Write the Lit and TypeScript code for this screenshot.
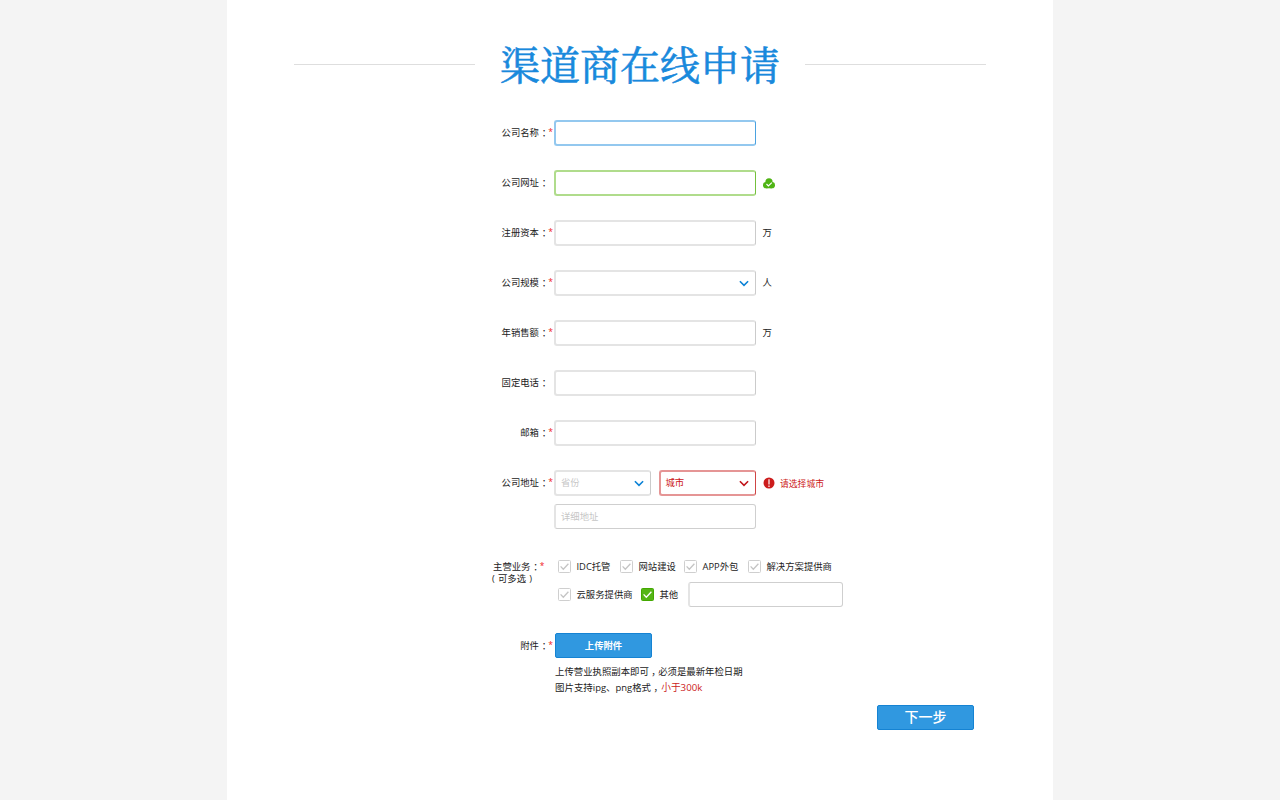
import { LitElement, html, css, svg, nothing } from "lit";
import { customElement, property } from "lit/decorators.js";

const chevron = (x: string) => html`<svg class="chev ${x}" width="10" height="7" viewBox="0 0 10 7">
  <path d="M0.9 1.2 L5 5.3 L9.1 1.2" fill="none" stroke="currentColor" stroke-width="1.6"/></svg>`;

@customElement("form-label")
class FormLabel extends LitElement {
  @property() text = "";
  @property({ type: Boolean }) required = false;
  static styles = css`
    :host { display: flex; justify-content: flex-end; line-height: 14px; white-space: nowrap; }
    .colon {
      width: 5px; margin: 0 1.5px 0 2.9px; line-height: 13px;
      font-family: "Noto Sans CJK SC", sans-serif; font-feature-settings: "halt";
    }
    .star { width: 4.7px; color: #f02020; font-size: 8.5px; line-height: 12px; }
  `;
  render() {
    return html`<span>${this.text}</span><span class="colon">：</span><span class="star">${this.required ? "*" : nothing}</span>`;
  }
}

@customElement("check-item")
class CheckItem extends LitElement {
  @property() text = "";
  @property({ type: Boolean }) checked = false;
  static styles = css`
    :host { display: flex; align-items: center; height: 14px; line-height: 14px; white-space: nowrap; }
    svg { display: block; margin-right: 5.5px; }
    span { padding-top: 1px; }
  `;
  render() {
    return html`<svg width="13" height="13" viewBox="0 0 13 13">
      ${this.checked
        ? svg`<rect x="0.5" y="0.5" width="12" height="12" rx="1" fill="#55b516" stroke="#43a800"/>`
        : svg`<rect x="0.5" y="0.5" width="12" height="12" rx="1" fill="#fff" stroke="#cfcfcf"/>`}
      <path d="M2.6 6.4 L5.3 9.2 L10.4 3.8" fill="none" stroke="${this.checked ? "#fff" : "#c4c4c4"}" stroke-width="1.3"/>
    </svg><span>${this.text}</span>`;
  }
}

@customElement("app-root")
class AppRoot extends LitElement {
  static styles = css`
    :host {
      display: flex; justify-content: center; height: 800px; background: #f4f4f4; overflow: hidden;
      font-family: "Open Sans", "Noto Sans CJK SC", sans-serif; font-size: 9.35px; color: #222;
    }
    .page { width: 826px; height: 800px; background: #fff; box-sizing: border-box; padding-top: 36px; }
    .head { display: flex; align-items: center; justify-content: center; height: 57px; gap: 25px; }
    .rule { width: 181px; height: 1px; background: #dedede; }
    h1 {
      margin: 0; width: 280px; font: 400 40px/53px "Noto Serif CJK SC", "Noto Serif SC", "Noto Sans CJK SC", serif;
      height: 57px; color: #1989dc; white-space: nowrap; -webkit-text-stroke: 0.6px #1989dc;
    }
    .form { margin-top: 27px; padding-left: 253px; }
    .row { display: grid; grid-template-columns: 73px auto; column-gap: 1px; align-items: center; height: 26px; margin-bottom: 24px; }
    .line { display: flex; align-items: center; }
    .box {
      box-sizing: border-box; display: flex; align-items: center; justify-content: space-between;
      width: 202px; height: 26px; padding: 0 6px 0 5px; border: 2px solid #e4e4e4;
      border-right: 1px solid #cbcbcb; border-radius: 3px; color: #c6c6c6; line-height: 14px;
    }
    .focus { border-color: #93c8ef; border-right-color: #4ba2e0; }
    .valid { border-color: #b0dc8c; border-right-color: #74c03c; }
    .error { border-color: #e59595; border-right-color: #cf4545; color: #cc1717; }
    .half { width: 97px; }
    .error.half { width: 97.5px; }
    .gap { margin-left: 7.5px; }
    .crisp { border-width: 1px 1px 1px 2px; border-color: #cfcfcf #cfcfcf #cfcfcf #e4e4e4; height: 25px; }
    .chev { display: block; margin-left: auto; }
    .blue { color: #0b82d6; }
    .red { color: #c1151b; }
    .unit { margin-left: 6.5px; line-height: 14px; }
    .mark { margin-left: 7px; display: block; }
    .msg { margin-left: 5px; color: #cc1717; line-height: 14px; font-size: 8.8px; padding-top: 1px; }
    .detail { margin: -16px 0 0 74px; }
    .biz { display: grid; grid-template-columns: 64.5px auto; margin-top: 30px; align-items: start; }
    .biz form-label { padding-top: 1px; }
    .sub {
      display: flex; margin: -2px 0 0 9px; line-height: 13px; white-space: nowrap;
      gap: 3.2px; padding-left: 3px;
    }
    .checks { display: grid; grid-template-columns: 62px 64px 64px auto; margin-left: 13.5px; }
    .checks2 { display: flex; align-items: center; margin: 8px 0 0 13.5px; height: 26px; }
    .checks2 check-item:first-child { width: 83px; }
    .checks2 check-item:nth-child(2) { width: 47px; }
    .other { width: 155px; }
    .attach { display: grid; grid-template-columns: 73px auto; column-gap: 2px; align-items: center; margin-top: 26px; }
    .btn {
      box-sizing: border-box; width: 97px; height: 25px; border: 1px solid #1583d3; border-radius: 2px;
      background: #3098e0; color: #fff; font: 700 9.35px/23px "Noto Sans CJK SC", sans-serif; text-align: center; padding: 0;
    }
    .note { margin: 6px 0 0 75px; white-space: nowrap; font-size: 9.38px; }
    .note p { display: flex; margin: 0; height: 16px; line-height: 16px; }
    .c { width: 5px; margin: 0 2px 0 2.4px; line-height: 15px; font-family: "Noto Sans CJK SC", sans-serif; font-feature-settings: "halt"; }
    .note p + p { font-size: 9.45px; }
    .warn { color: #cc1c1c; font-size: 9.7px; margin-left: 0.8px; }
    .next { display: block; margin: 9px 0 0 397px; padding-bottom: 2px; font-size: 14px; font-weight: 500; line-height: 21px; }
  `;

  field(label: string, required: boolean, kind = "", tail: unknown = nothing, inner: unknown = nothing) {
    return html`<div class="row">
      <form-label text=${label} ?required=${required}></form-label>
      <div class="line"><div class="box ${kind}">${inner}</div>${tail}</div>
    </div>`;
  }

  render() {
    const unit = (t: string) => html`<span class="unit">${t}</span>`;
    const cloud = html`<svg class="mark" width="12" height="11" viewBox="0 0 12 11">
      <g fill="#4fb414"><circle cx="6" cy="3.9" r="3.6"/><circle cx="3.1" cy="7.2" r="3.1"/><circle cx="8.9" cy="7.2" r="3.1"/><rect x="3" y="5" width="6" height="5.3"/></g>
      <path d="M3.5 6 L5.4 7.9 L8.8 4.6" fill="none" stroke="#fff" stroke-width="1.2"/></svg>`;
    const alert = html`<svg class="mark" width="12" height="12" viewBox="0 0 12 12">
      <circle cx="6" cy="6" r="5.5" fill="#cc1c1c"/><path d="M6 2.2V7.4M6 8.5V9.9" stroke="#fff" stroke-width="1.2"/></svg>`;
    return html`<main class="page">
      <header class="head"><span class="rule"></span><h1>渠道商在线申请</h1><span class="rule"></span></header>
      <section class="form">
        ${this.field("公司名称", true, "focus")}
        ${this.field("公司网址", false, "valid", cloud)}
        ${this.field("注册资本", true, "", unit("万"))}
        ${this.field("公司规模", true, "", unit("人"), chevron("blue"))}
        ${this.field("年销售额", true, "", unit("万"))}
        ${this.field("固定电话", false)}
        ${this.field("邮箱", true)}
        <div class="row">
          <form-label text="公司地址" required></form-label>
          <div class="line">
            <div class="box half">省份${chevron("blue")}</div>
            <div class="box half error gap">城市${chevron("red")}</div>
            ${alert}<span class="msg">请选择城市</span>
          </div>
        </div>
        <div class="box crisp detail">详细地址</div>
        <div class="biz">
          <div><form-label text="主营业务" required></form-label><div class="sub"><span>(</span><span>可多选</span><span>)</span></div></div>
          <div>
            <div class="checks">
              <check-item text="IDC托管"></check-item><check-item text="网站建设"></check-item>
              <check-item text="APP外包"></check-item><check-item text="解决方案提供商"></check-item>
            </div>
            <div class="checks2">
              <check-item text="云服务提供商"></check-item><check-item text="其他" checked></check-item>
              <div class="box crisp other"></div>
            </div>
          </div>
        </div>
        <div class="attach"><form-label text="附件" required></form-label><button class="btn">上传附件</button></div>
        <div class="note">
          <p>上传营业执照副本即可<span class="c">，</span>必须是最新年检日期</p>
          <p>图片支持ipg、png格式<span class="c">，</span><span class="warn">小于300k</span></p>
        </div>
        <button class="btn next">下一步</button>
      </section>
    </main>`;
  }
}
